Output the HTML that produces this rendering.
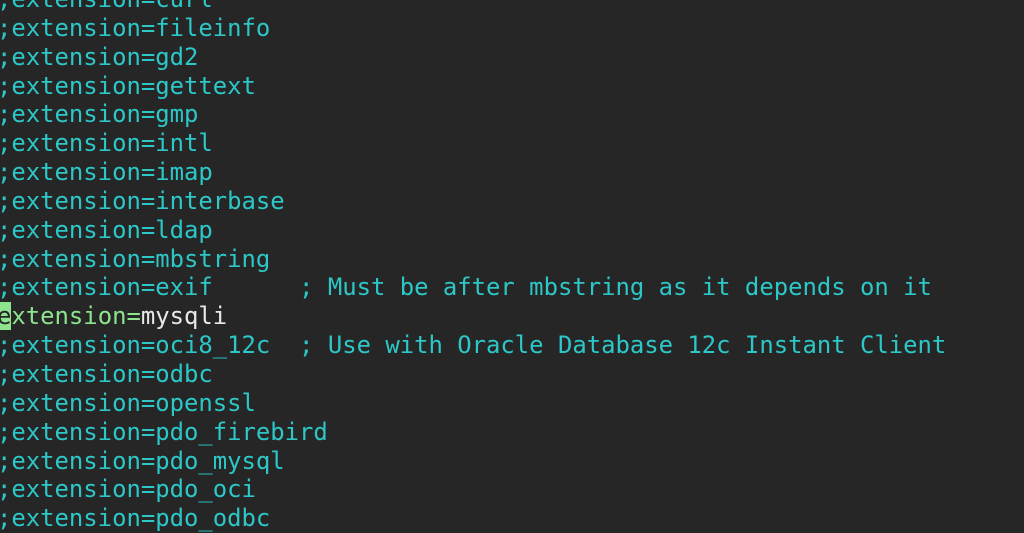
<!DOCTYPE html>
<html><head><style>
html,body{margin:0;width:1024px;height:532px;overflow:hidden;background:#262626}
pre{position:absolute;left:-3px;top:-15px;margin:0;font-family:"DejaVu Sans Mono","Liberation Mono",monospace;font-size:23.9px;line-height:28.85px;color:#2dc7c7}
.g{color:#8ee48e}.w{color:#e8e8e8}
.cur{background:#8ee48e;color:#262626}
</style></head><body>
<pre>;extension=curl
;extension=fileinfo
;extension=gd2
;extension=gettext
;extension=gmp
;extension=intl
;extension=imap
;extension=interbase
;extension=ldap
;extension=mbstring
;extension=exif      ; Must be after mbstring as it depends on it
<span class="cur">e</span><span class="g">xtension=</span><span class="w">mysqli</span>
;extension=oci8_12c  ; Use with Oracle Database 12c Instant Client
;extension=odbc
;extension=openssl
;extension=pdo_firebird
;extension=pdo_mysql
;extension=pdo_oci
;extension=pdo_odbc</pre>
</body></html>
